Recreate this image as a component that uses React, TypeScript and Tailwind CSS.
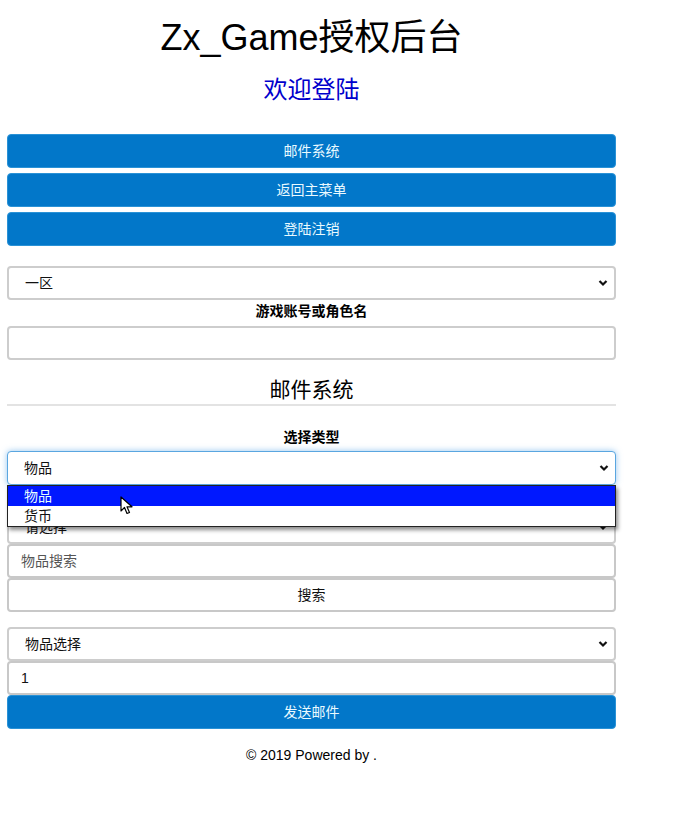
import React from 'react'

const font = { fontFamily: '"Liberation Sans", "Noto Sans CJK SC", sans-serif' }

function Chevron() {
  return (
    <svg width="10" height="8" viewBox="0 0 10 8" className="absolute right-[6px] top-1/2 -translate-y-1/2">
      <path d="M1.5 2 L5 5.5 L8.5 2" fill="none" stroke="#111" strokeWidth="2.2" />
    </svg>
  )
}

function FakeSelect({ text, focused, className = '' }: { text: string; focused?: boolean; className?: string }) {
  return (
    <div
      className={`relative flex h-[34px] items-center rounded-[4px] bg-white pl-[16px] text-[14px] text-[#111] ${
        focused ? 'border border-[#5aa6e0] shadow-[0_0_6px_rgba(80,160,230,0.6)]' : 'border-2 border-[#cdcdcd]'
      } ${className}`}
    >
      {text}
      <Chevron />
    </div>
  )
}

function BlueButton({ children }: { children: React.ReactNode }) {
  return (
    <button className="flex h-[34px] w-full items-center justify-center rounded-[4px] border border-[#2a92d6] bg-[#0277c9] text-[14px] text-[#eafaff]">
      {children}
    </button>
  )
}

export default function App() {
  return (
    <div className="min-h-[815px] bg-white text-black" style={font}>
      <div className="ml-[7px] w-[609px] pt-[15px]">
        <h1 className="text-center text-[36px] leading-[46px]">Zx_Game授权后台</h1>
        <h2 className="mt-[14px] text-center text-[24px] leading-[30px] text-[#0000cc]">欢迎登陆</h2>

        <div className="mt-[29px] flex flex-col gap-[5px]">
          <BlueButton>邮件系统</BlueButton>
          <BlueButton>返回主菜单</BlueButton>
          <BlueButton>登陆注销</BlueButton>
        </div>

        <FakeSelect text="一区" className="mt-[20px]" />
        <div className="h-[26px] text-center text-[14px] font-bold leading-[22px]">游戏账号或角色名</div>
        <div className="h-[34px] rounded-[4px] border-2 border-[#cdcdcd] bg-white" />

        <div className="mt-[18px] text-center text-[21px] leading-[24px]">邮件系统</div>
        <div className="mt-[2px] h-[2px] bg-[#e3e3e3]" />

        <div className="mt-[21px] h-[24px] text-center text-[14px] font-bold leading-[20px]">选择类型</div>

        <div className="relative">
          <FakeSelect text="物品" focused />
          <div className="mt-[25px]">
            <FakeSelect text="请选择" />
          </div>

          <div className="absolute left-0 top-[34px] z-10 w-[609px] border border-[#222] bg-white text-[14px] shadow-[2px_3px_4px_rgba(0,0,0,0.45)]">
            <div className="flex h-[20px] items-center bg-[#0018ff] pl-[16px] text-[#e8ffff]">物品</div>
            <div className="flex h-[20px] items-center pl-[16px] text-[#111]">货币</div>
          </div>

          <svg
            width="14"
            height="20"
            viewBox="0 0 14 20"
            className="absolute left-[113px] top-[45px] z-20"
          >
            <path
              d="M1 1 L1 15 L4.5 11.5 L7 17.5 L9.5 16.5 L7 10.8 L12 10.8 Z"
              fill="#fff"
              stroke="#000"
              strokeWidth="1.2"
              strokeLinejoin="round"
            />
          </svg>
        </div>

        <div className="flex h-[34px] items-center rounded-[4px] border-2 border-[#c8c8c8] bg-white pl-[12px] text-[14px] text-[#555]">
          物品搜索
        </div>
        <button className="flex h-[34px] w-full items-center justify-center rounded-[4px] border-2 border-[#c8c8c8] bg-white text-[14px] text-[#111]">
          搜索
        </button>

        <FakeSelect text="物品选择" className="mt-[15px]" />
        <div className="flex h-[34px] items-center rounded-[4px] border-2 border-[#c8c8c8] bg-white pl-[12px] text-[14px] text-[#111]">
          1
        </div>
        <BlueButton>发送邮件</BlueButton>

        <div className="mt-[16px] text-center text-[14px] leading-[20px]">© 2019 Powered by .</div>
      </div>
    </div>
  )
}
